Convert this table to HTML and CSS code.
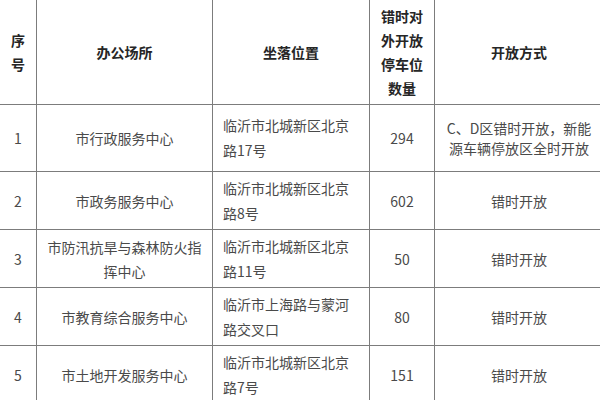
FILE: index.html
```html
<!DOCTYPE html>
<html lang="zh">
<head>
<meta charset="utf-8">
<link rel="stylesheet" href="styles.css">
</head>
<body>
<table class="parking">
  <colgroup>
    <col class="c-no">
    <col class="c-office">
    <col class="c-addr">
    <col class="c-count">
    <col class="c-mode">
  </colgroup>
  <thead>
    <tr class="head">
      <th>序号</th>
      <th>办公场所</th>
      <th>坐落位置</th>
      <th class="count-head">错时对外开放停车位数量</th>
      <th>开放方式</th>
    </tr>
  </thead>
  <tbody>
    <tr class="first">
      <td>1</td>
      <td>市行政服务中心</td>
      <td class="addr">临沂市北城新区北京路17号</td>
      <td>294</td>
      <td class="mode-tight">C、D区错时开放，新能源车辆停放区全时开放</td>
    </tr>
    <tr>
      <td>2</td>
      <td>市政务服务中心</td>
      <td class="addr">临沂市北城新区北京路8号</td>
      <td>602</td>
      <td>错时开放</td>
    </tr>
    <tr>
      <td>3</td>
      <td>市防汛抗旱与森林防火指挥中心</td>
      <td class="addr">临沂市北城新区北京路11号</td>
      <td>50</td>
      <td>错时开放</td>
    </tr>
    <tr>
      <td>4</td>
      <td>市教育综合服务中心</td>
      <td class="addr">临沂市上海路与蒙河路交叉口</td>
      <td>80</td>
      <td>错时开放</td>
    </tr>
    <tr>
      <td>5</td>
      <td>市土地开发服务中心</td>
      <td class="addr">临沂市北城新区北京路7号</td>
      <td>151</td>
      <td>错时开放</td>
    </tr>
  </tbody>
</table>
</body>
</html>
```
FILE: styles.css
```css
html, body {
  margin: 0;
  padding: 0;
  background: #ffffff;
  overflow: hidden;
}

.parking {
  border-collapse: collapse;
  table-layout: fixed;
  width: 604px;
  margin: -1px 0 0 -1px;
  font-family: "Noto Sans CJK SC", "Noto Sans", sans-serif;
  font-size: 14px;
  color: #4a4a4a;
}

.c-no { width: 37px; }
.c-office { width: 176px; }
.c-addr { width: 157px; }
.c-count { width: 65px; }
.c-mode { width: 169px; }

.parking th,
.parking td {
  border: 1px solid #7c7c7c;
  text-align: center;
  vertical-align: middle;
  padding: 0 10px;
  line-height: 24px;
  word-break: break-all;
}

.parking th {
  font-weight: bold;
  color: #262626;
}

.parking th:first-child,
.parking td:first-child {
  padding: 0 8px;
}

.head { height: 105px; }
.first { height: 67px; }
tbody tr { height: 58px; }

.count-head {
  padding: 0 6px;
}

.parking td.addr {
  text-align: left;
  line-height: 25px;
}

.parking td.mode-tight {
  line-height: 20px;
  padding: 0 6px;
}
```
